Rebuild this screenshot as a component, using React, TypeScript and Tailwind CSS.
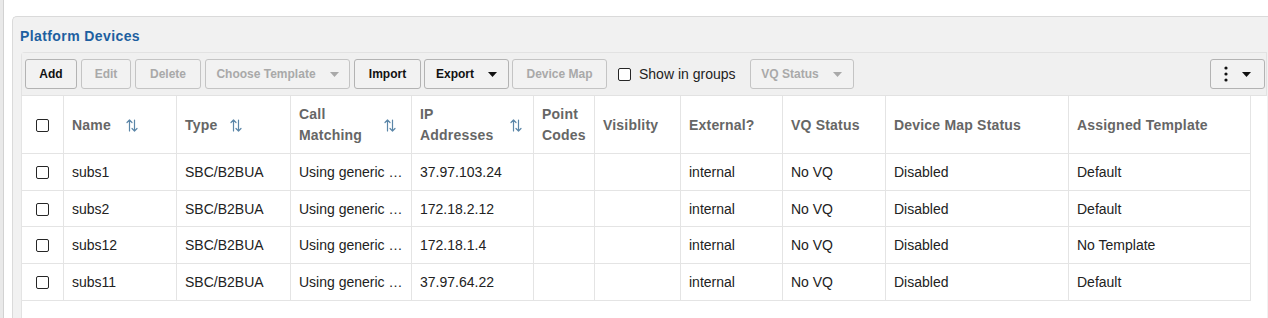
import React from "react";

const font = { fontFamily: '"Liberation Sans", Arial, sans-serif' };

function Caret({ color }: { color: string }) {
  return (
    <svg width="9" height="5" viewBox="0 0 9 5" className="shrink-0">
      <path d="M0 0 L9 0 L4.5 5 Z" fill={color} />
    </svg>
  );
}

function SortIcon() {
  return (
    <svg width="12" height="13" viewBox="0 0 12 13" className="shrink-0">
      <g stroke="#5b86a8" strokeWidth="1.2" fill="none" strokeLinecap="round" strokeLinejoin="round">
        <path d="M3.5 12 L3.5 1 M1 3.5 L3.5 1 L6 3.5" />
        <path d="M8.5 1 L8.5 12 M6 9.5 L8.5 12 L11 9.5" />
      </g>
    </svg>
  );
}

function Box() {
  return <div className="w-[13px] h-[13px] border border-[#262626] rounded-[2px] bg-white" />;
}

function Btn({
  label,
  w,
  ml,
  disabled,
  caret,
}: {
  label: string;
  w: string;
  ml: string;
  disabled?: boolean;
  caret?: boolean;
}) {
  return (
    <div
      className={`${w} ${ml} h-[30px] shrink-0 flex items-center justify-center gap-[14px] rounded-[3px] border bg-[#f2f2f2] text-[12px] font-bold ${
        disabled ? "border-[#c4c4c4] text-[#a9a9a9]" : "border-[#b3b3b3] text-[#111]"
      }`}
    >
      <span>{label}</span>
      {caret && <Caret color={disabled ? "#a9a9a9" : "#111"} />}
    </div>
  );
}

const rows = [
  { name: "subs1", ip: "37.97.103.24", tpl: "Default", h: "h-[37px]" },
  { name: "subs2", ip: "172.18.2.12", tpl: "Default", h: "h-[36px]" },
  { name: "subs12", ip: "172.18.1.4", tpl: "No Template", h: "h-[37px]" },
  { name: "subs11", ip: "37.97.64.22", tpl: "Default", h: "h-[37px]" },
];

function SortHead({ text, w }: { text: React.ReactNode; w: string }) {
  return (
    <div className="flex items-center">
      <span className={`${w} shrink-0 leading-[21px]`}>{text}</span>
      <SortIcon />
    </div>
  );
}

export default function App() {
  const th =
    "border border-[#e4e4e4] border-t-0 px-[8px] pt-[2px] text-left align-middle font-bold text-[14px] tracking-[0.2px] text-[#666]";
  const td =
    "border border-[#e4e4e4] px-[8px] pt-[2px] text-[14px] text-[#222] whitespace-nowrap overflow-hidden text-ellipsis";
  return (
    <div className="w-[1268px] h-[318px] bg-white flex overflow-hidden" style={font}>
      <div className="w-[4px] h-full bg-[#e9e9e9] border-r border-[#d2d2d2] shrink-0" />
      <div className="w-[8px] h-full shrink-0" />
      <div className="mt-[16px] flex-1 flex flex-col border-l border-t border-[#dadada] rounded-tl-[5px] bg-[#f1f1f1] pl-[8px]">
        <div className="h-[35px] pt-[3px] flex items-center -ml-px text-[14px] tracking-[0.4px] font-bold text-[#1d5fa0]">
          Platform Devices
        </div>
        <div className="flex-1 flex flex-col border-l border-t border-[#e2e2e2] rounded-tl-[4px] mr-[1px]">
          <div className="h-[43px] flex items-center bg-[#f0f0f0] border-b border-r border-[#e2e2e2] shrink-0">
            <Btn label="Add" w="w-[52px]" ml="ml-[3px]" />
            <Btn label="Edit" w="w-[50px]" ml="ml-[4px]" disabled />
            <Btn label="Delete" w="w-[66px]" ml="ml-[4px]" disabled />
            <Btn label="Choose Template" w="w-[145px]" ml="ml-[4px]" disabled caret />
            <Btn label="Import" w="w-[67px]" ml="ml-[4px]" />
            <Btn label="Export" w="w-[85px]" ml="ml-[3px]" caret />
            <Btn label="Device Map" w="w-[95px]" ml="ml-[3px]" disabled />
            <div className="ml-[11px] flex items-center gap-[8px] text-[14px] text-[#222]">
              <Box />
              <span>Show in groups</span>
            </div>
            <Btn label="VQ Status" w="w-[104px]" ml="ml-[14px]" disabled caret />
            <div className="ml-auto mr-[1px] w-[55px] h-[30px] flex items-center justify-center gap-[14px] rounded-[3px] border border-[#b3b3b3] bg-[#f2f2f2]">
              <svg width="4" height="16" viewBox="0 0 4 16">
                <circle cx="2" cy="2" r="1.6" fill="#111" />
                <circle cx="2" cy="8" r="1.6" fill="#111" />
                <circle cx="2" cy="14" r="1.6" fill="#111" />
              </svg>
              <Caret color="#111" />
            </div>
          </div>
          <div className="flex-1 bg-white">
            <table className="table-fixed border-collapse w-[1229px] -ml-px">
              <colgroup>
                <col className="w-[42px]" />
                <col className="w-[113px]" />
                <col className="w-[114px]" />
                <col className="w-[121px]" />
                <col className="w-[122px]" />
                <col className="w-[61px]" />
                <col className="w-[86px]" />
                <col className="w-[102px]" />
                <col className="w-[103px]" />
                <col className="w-[183px]" />
                <col className="w-[182px]" />
              </colgroup>
              <thead>
                <tr className="h-[57px]">
                  <th className={`${th} pl-[14px]`}>
                    <Box />
                  </th>
                  <th className={th}>
                    <SortHead text="Name" w="w-[54px]" />
                  </th>
                  <th className={th}>
                    <SortHead text="Type" w="w-[45px]" />
                  </th>
                  <th className={th}>
                    <SortHead text={<>Call<br />Matching</>} w="w-[85px]" />
                  </th>
                  <th className={th}>
                    <SortHead text={<>IP<br />Addresses</>} w="w-[90px]" />
                  </th>
                  <th className={`${th} leading-[21px]`}>
                    Point<br />Codes
                  </th>
                  <th className={th}>Visiblity</th>
                  <th className={th}>External?</th>
                  <th className={th}>VQ Status</th>
                  <th className={th}>Device Map Status</th>
                  <th className={th}>Assigned Template</th>
                </tr>
              </thead>
              <tbody>
                {rows.map((r) => (
                  <tr key={r.name} className={r.h}>
                    <td className={`${td} pl-[14px]`}>
                      <Box />
                    </td>
                    <td className={td}>{r.name}</td>
                    <td className={td}>SBC/B2BUA</td>
                    <td className={td}>Using generic configuration</td>
                    <td className={td}>{r.ip}</td>
                    <td className={td}></td>
                    <td className={td}></td>
                    <td className={td}>internal</td>
                    <td className={td}>No VQ</td>
                    <td className={td}>Disabled</td>
                    <td className={td}>{r.tpl}</td>
                  </tr>
                ))}
              </tbody>
            </table>
          </div>
        </div>
      </div>
    </div>
  );
}
